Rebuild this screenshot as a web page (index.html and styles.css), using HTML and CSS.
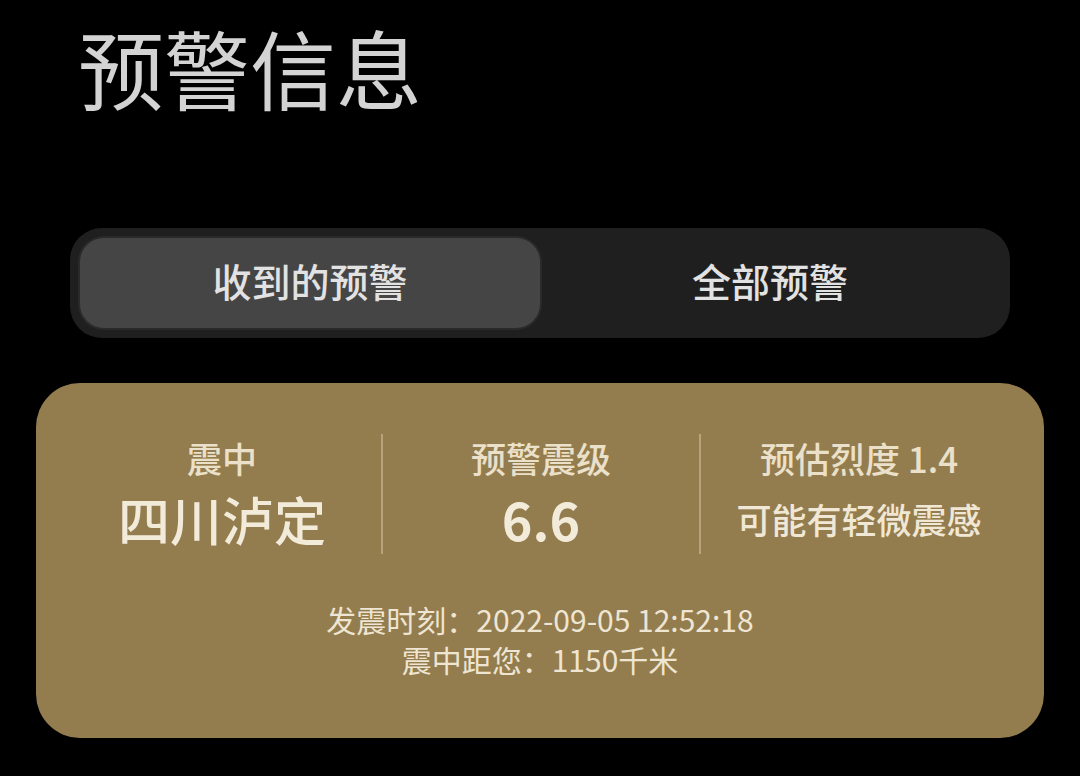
FILE: index.html
```html
<!DOCTYPE html>
<html lang="zh-CN">
<head>
<meta charset="utf-8">
<title>预警信息</title>
<link rel="stylesheet" href="styles.css">
</head>
<body>
<div class="page">
  <h1 class="title">预警信息</h1>
  <div class="tabs">
    <div class="tab active">收到的预警</div>
    <div class="tab">全部预警</div>
  </div>
  <div class="card">
    <div class="cols">
      <div class="col">
        <div class="label">震中</div>
        <div class="value big">四川泸定</div>
      </div>
      <div class="col">
        <div class="label">预警震级</div>
        <div class="value big num">6.6</div>
      </div>
      <div class="col">
        <div class="label">预估烈度 1.4</div>
        <div class="value small">可能有轻微震感</div>
      </div>
    </div>
    <div class="meta">
      <div class="meta-line">发震时刻：2022-09-05 12:52:18</div>
      <div class="meta-line">震中距您：1150千米</div>
    </div>
  </div>
</div>
</body>
</html>
```
FILE: styles.css
```css
html, body {
  margin: 0;
  padding: 0;
  background: #000;
}
body {
  width: 1080px;
  height: 776px;
  overflow: hidden;
  font-family: "Noto Sans CJK SC", "Noto Sans", sans-serif;
}
.page {
  padding-top: 24px;
}
.title {
  margin: 0 0 0 78px;
  font-size: 86px;
  line-height: 86px;
  font-weight: 400;
  color: #d3d3d3;
}
.tabs {
  margin: 118px 70px 0 70px;
  height: 110px;
  box-sizing: border-box;
  padding: 10px;
  background: #1f1f1f;
  border-radius: 32px;
  display: flex;
}
.tab {
  flex: 1;
  display: flex;
  align-items: center;
  justify-content: center;
  padding-bottom: 6px;
  font-size: 39px;
  font-weight: 500;
  color: #e2e2e2;
  border-radius: 24px;
}
.tab.active {
  background: #454545;
  box-shadow: 0 0 0 2px #2a2a2a;
}
.card {
  margin: 45px 36px 0 36px;
  height: 355px;
  box-sizing: border-box;
  padding: 51px 27px 0 27px;
  background: #937c4e;
  border-radius: 44px;
  color: #efe6d3;
}
.cols {
  display: grid;
  grid-template-columns: 1fr 1fr 1fr;
}
.col {
  height: 120px;
  display: flex;
  flex-direction: column;
  align-items: center;
}
.col + .col {
  border-left: 2px solid #b8a47a;
}
.label {
  height: 50px;
  line-height: 48px;
  font-size: 35px;
  font-weight: 500;
  color: #ebe0c9;
}
.value {
  height: 70px;
  line-height: 70px;
}
.value.big {
  font-size: 52px;
  font-weight: 500;
  color: #f3ebda;
}
.value.num {
  font-weight: 700;
}
.value.small {
  font-size: 35px;
  font-weight: 500;
  color: #f0e7d5;
}
.meta {
  margin-top: 45px;
  text-align: center;
}
.meta-line {
  font-size: 30px;
  line-height: 40px;
  font-weight: 400;
  color: #eee5d2;
}
```
